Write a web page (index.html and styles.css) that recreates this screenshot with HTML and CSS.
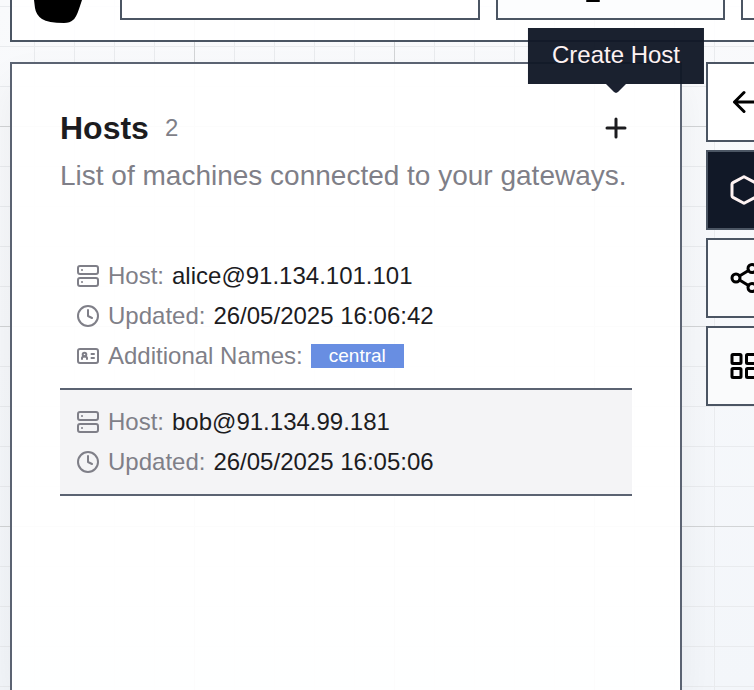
FILE: index.html
```html
<!DOCTYPE html>
<html lang="en">
<head>
  <meta charset="UTF-8" />
  <meta name="viewport" content="width=device-width, initial-scale=1.0" />
  <title>Hosts</title>
  <link rel="stylesheet" href="styles.css">
</head>
<body>
  <header class="topbar">
    <svg class="logo" viewBox="0 0 50 24" aria-hidden="true">
      <path d="M2 0H50L47 9Q44 18 41 20Q38 23 32 23Q16 23 10 19Q4 15 3 8Z" fill="#000" />
    </svg>
    <div class="slot slot-wide"></div>
    <button class="slot slot-mid" aria-label="Terminal">
      <svg class="cursor" viewBox="0 0 14 2" aria-hidden="true"><path d="M1 1H13" /></svg>
    </button>
    <div class="slot slot-last"></div>
  </header>

  <main class="content">
    <section class="panel">
      <div class="panel-head">
        <h1>Hosts</h1>
        <span class="count">2</span>
        <button class="add" aria-labelledby="addTip">
          <svg class="icon" viewBox="0 0 32 32"><path d="M16 7v18M7 16h18" /></svg>
          <span class="tooltip" id="addTip" role="tooltip">Create Host</span>
        </button>
      </div>
      <p class="subtitle">List of machines connected to your gateways.</p>

      <ul class="hosts">
        <li class="host">
          <div class="field">
            <svg class="icon" viewBox="0 0 24 24"><rect x="2" y="2" width="20" height="8" rx="2" /><rect x="2" y="14" width="20" height="8" rx="2" /><path d="M6 6h.01M6 18h.01" /></svg>
            <span class="label">Host:</span>
            <span>alice@91.134.101.101</span>
          </div>
          <div class="field">
            <svg class="icon" viewBox="0 0 24 24"><circle cx="12" cy="12" r="10" /><path d="M12 6v6l4 2" /></svg>
            <span class="label">Updated:</span>
            <span>26/05/2025 16:06:42</span>
          </div>
          <div class="field">
            <svg class="icon" viewBox="0 0 24 24"><rect x="2" y="5" width="20" height="14" rx="2" /><path d="M6 15v-1q0-1.500 2.500-1.500t2.500 1.500v1M15.500 10h2.500M15.500 14h2.500" /><circle cx="8.500" cy="10.500" r="1.800" /></svg>
            <span class="label">Additional Names:</span>
            <span class="tag">central</span>
          </div>
        </li>
        <li class="host active">
          <div class="field">
            <svg class="icon" viewBox="0 0 24 24"><rect x="2" y="2" width="20" height="8" rx="2" /><rect x="2" y="14" width="20" height="8" rx="2" /><path d="M6 6h.01M6 18h.01" /></svg>
            <span class="label">Host:</span>
            <span>bob@91.134.99.181</span>
          </div>
          <div class="field">
            <svg class="icon" viewBox="0 0 24 24"><circle cx="12" cy="12" r="10" /><path d="M12 6v6l4 2" /></svg>
            <span class="label">Updated:</span>
            <span>26/05/2025 16:05:06</span>
          </div>
        </li>
      </ul>
    </section>

    <nav class="tools" aria-label="Views">
      <button class="tool back" aria-label="Back">
        <svg viewBox="0 0 32 32"><path d="M27 16H6.500M16 6.500L6.500 16l9.500 9.500" /></svg>
      </button>
      <button class="tool selected" aria-label="Hosts">
        <svg viewBox="0 0 32 32"><path d="M15 3.200Q16 2.500 17 3.200L27 8.600Q28 9.200 28 10.300V21.700Q28 22.800 27 23.400L17 28.800Q16 29.500 15 28.800L5 23.400Q4 22.800 4 21.700V10.300Q4 9.200 5 8.600Z" /></svg>
      </button>
      <button class="tool" aria-label="Graph">
        <svg viewBox="0 0 32 32"><circle cx="8" cy="16" r="4" /><circle cx="24" cy="6.500" r="4" /><circle cx="24" cy="25.500" r="4" /><path d="M11.500 14l9-5.500M11.500 18l9 5.500" /></svg>
      </button>
      <button class="tool" aria-label="Grid">
        <svg viewBox="0 0 32 32"><rect x="4" y="4.500" width="9" height="9" rx="1" /><rect x="18.500" y="4.500" width="9" height="9" rx="1" /><rect x="4" y="18.500" width="9" height="9" rx="1" /><rect x="18.500" y="18.500" width="9" height="9" rx="1" /></svg>
      </button>
    </nav>
  </main>
</body>
</html>
```
FILE: styles.css
```css
* {
  box-sizing: border-box;
}

body {
  margin: 0;
  padding-left: 10px;
  min-height: 100vh;
  display: flex;
  flex-direction: column;
  gap: 20px;
  overflow: hidden;
  font-family: "Liberation Sans", Arial, sans-serif;
  font-size: 24px;
  line-height: 32px;
  color: #1c1c1f;
  /* major lines every 200px, minor lines every 40px */
  background:
    linear-gradient(to right, #d2d4d6 1px, transparent 1px) 194px 0 / 200px 200px,
    linear-gradient(#d2d4d6 1px, transparent 1px) 0 126px / 200px 200px,
    linear-gradient(to right, #e9ebee 1px, transparent 1px) 34px 0 / 40px 40px,
    linear-gradient(#e9ebee 1px, transparent 1px) 0 6px / 40px 40px,
    linear-gradient(#f9fafc, #f3f6fa);
}

button {
  font: inherit;
  color: inherit;
  padding: 0;
  cursor: pointer;
}

svg {
  display: block;
  fill: none;
  stroke: currentColor;
  stroke-linecap: round;
  stroke-linejoin: round;
}

.topbar {
  display: flex;
  gap: 16px;
  height: 42px;
  padding: 0 0 20px 20px;
  border: 2px solid #4b5563;
  border-width: 0 0 2px 2px;
  background: rgba(255, 255, 255, 0.9);
}

.logo {
  width: 50px;
  height: 24px;
  margin-right: 22px;
  flex: none;
  stroke: none;
}

.slot {
  height: 20px;
  border: 2px solid #4b5563;
  border-top: 0;
  background: #fff;
}

.slot-wide {
  flex: 1;
}

.slot-mid {
  width: 229px;
  padding: 0 0 16px 88px;
  background: #fcfdfe;
}

.slot-last {
  width: 13px;
  border-right: 0;
}

.cursor {
  width: 14px;
  height: 2px;
  color: #000;
  stroke-width: 2;
}

.content {
  flex: 1;
  display: flex;
  gap: 24px;
}

.panel {
  flex: 1;
  padding: 44px 48px;
  border: 2px solid #5b6372;
  border-bottom: 0;
  background: rgba(255, 255, 255, 0.92);
  box-shadow: 0 20px 40px rgba(0, 0, 0, 0.06);
}

.panel-head {
  display: flex;
  align-items: center;
  gap: 16px;
  height: 40px;
}

h1 {
  margin: 0;
  font-size: 32px;
  line-height: 40px;
}

.count,
.label,
.subtitle {
  color: #7f7f88;
}

.add {
  position: relative;
  display: flex;
  justify-content: center;
  align-items: center;
  width: 32px;
  height: 40px;
  margin-left: auto;
  border: 0;
  background: none;
}

.add .icon {
  width: 32px;
  height: 32px;
  stroke-width: 3;
}

.tooltip {
  position: absolute;
  left: 50%;
  bottom: 100%;
  margin-bottom: 24px;
  padding: 11px 24px 13px;
  transform: translateX(-50%);
  white-space: nowrap;
  background: rgba(17, 24, 39, 0.96);
  color: #fef2f2;
}

.tooltip::after {
  content: "";
  position: absolute;
  left: 50%;
  top: 100%;
  width: 20px;
  height: 9px;
  transform: translateX(-50%);
  background: #1b2130;
  clip-path: polygon(0 0, 100% 0, 60% 88%, 50% 100%, 40% 88%);
}

.subtitle {
  margin: 8px 0 0;
  font-size: 28px;
  line-height: 40px;
  white-space: nowrap;
}

.hosts {
  list-style: none;
  margin: 48px 0 0;
  padding: 0;
}

.host {
  padding: 12px 16px;
  border-bottom: 2px solid #5b6372;
}

.host.active {
  background: #f4f4f6;
}

.field {
  display: flex;
  align-items: center;
  gap: 8px;
  height: 40px;
}

.field .icon {
  width: 24px;
  height: 24px;
  flex: none;
  color: #7f7f88;
  stroke-width: 2;
}

.tag {
  padding: 0 18px;
  font-size: 19px;
  line-height: 24px;
  background: #688ee2;
  color: #fff;
}

.tools {
  display: flex;
  flex-direction: column;
  gap: 8px;
  width: 48px;
}

.tool {
  display: flex;
  justify-content: center;
  align-items: center;
  width: 76px;
  height: 80px;
  border: 2px solid #4b5563;
  background: #fafbfc;
  color: #000;
}

.tool svg {
  width: 32px;
  height: 32px;
  flex: none;
  stroke-width: 3;
}

.tool.back {
  background: #fff;
}

.tool.selected {
  background: #111827;
  color: #fef2f2;
}
```
